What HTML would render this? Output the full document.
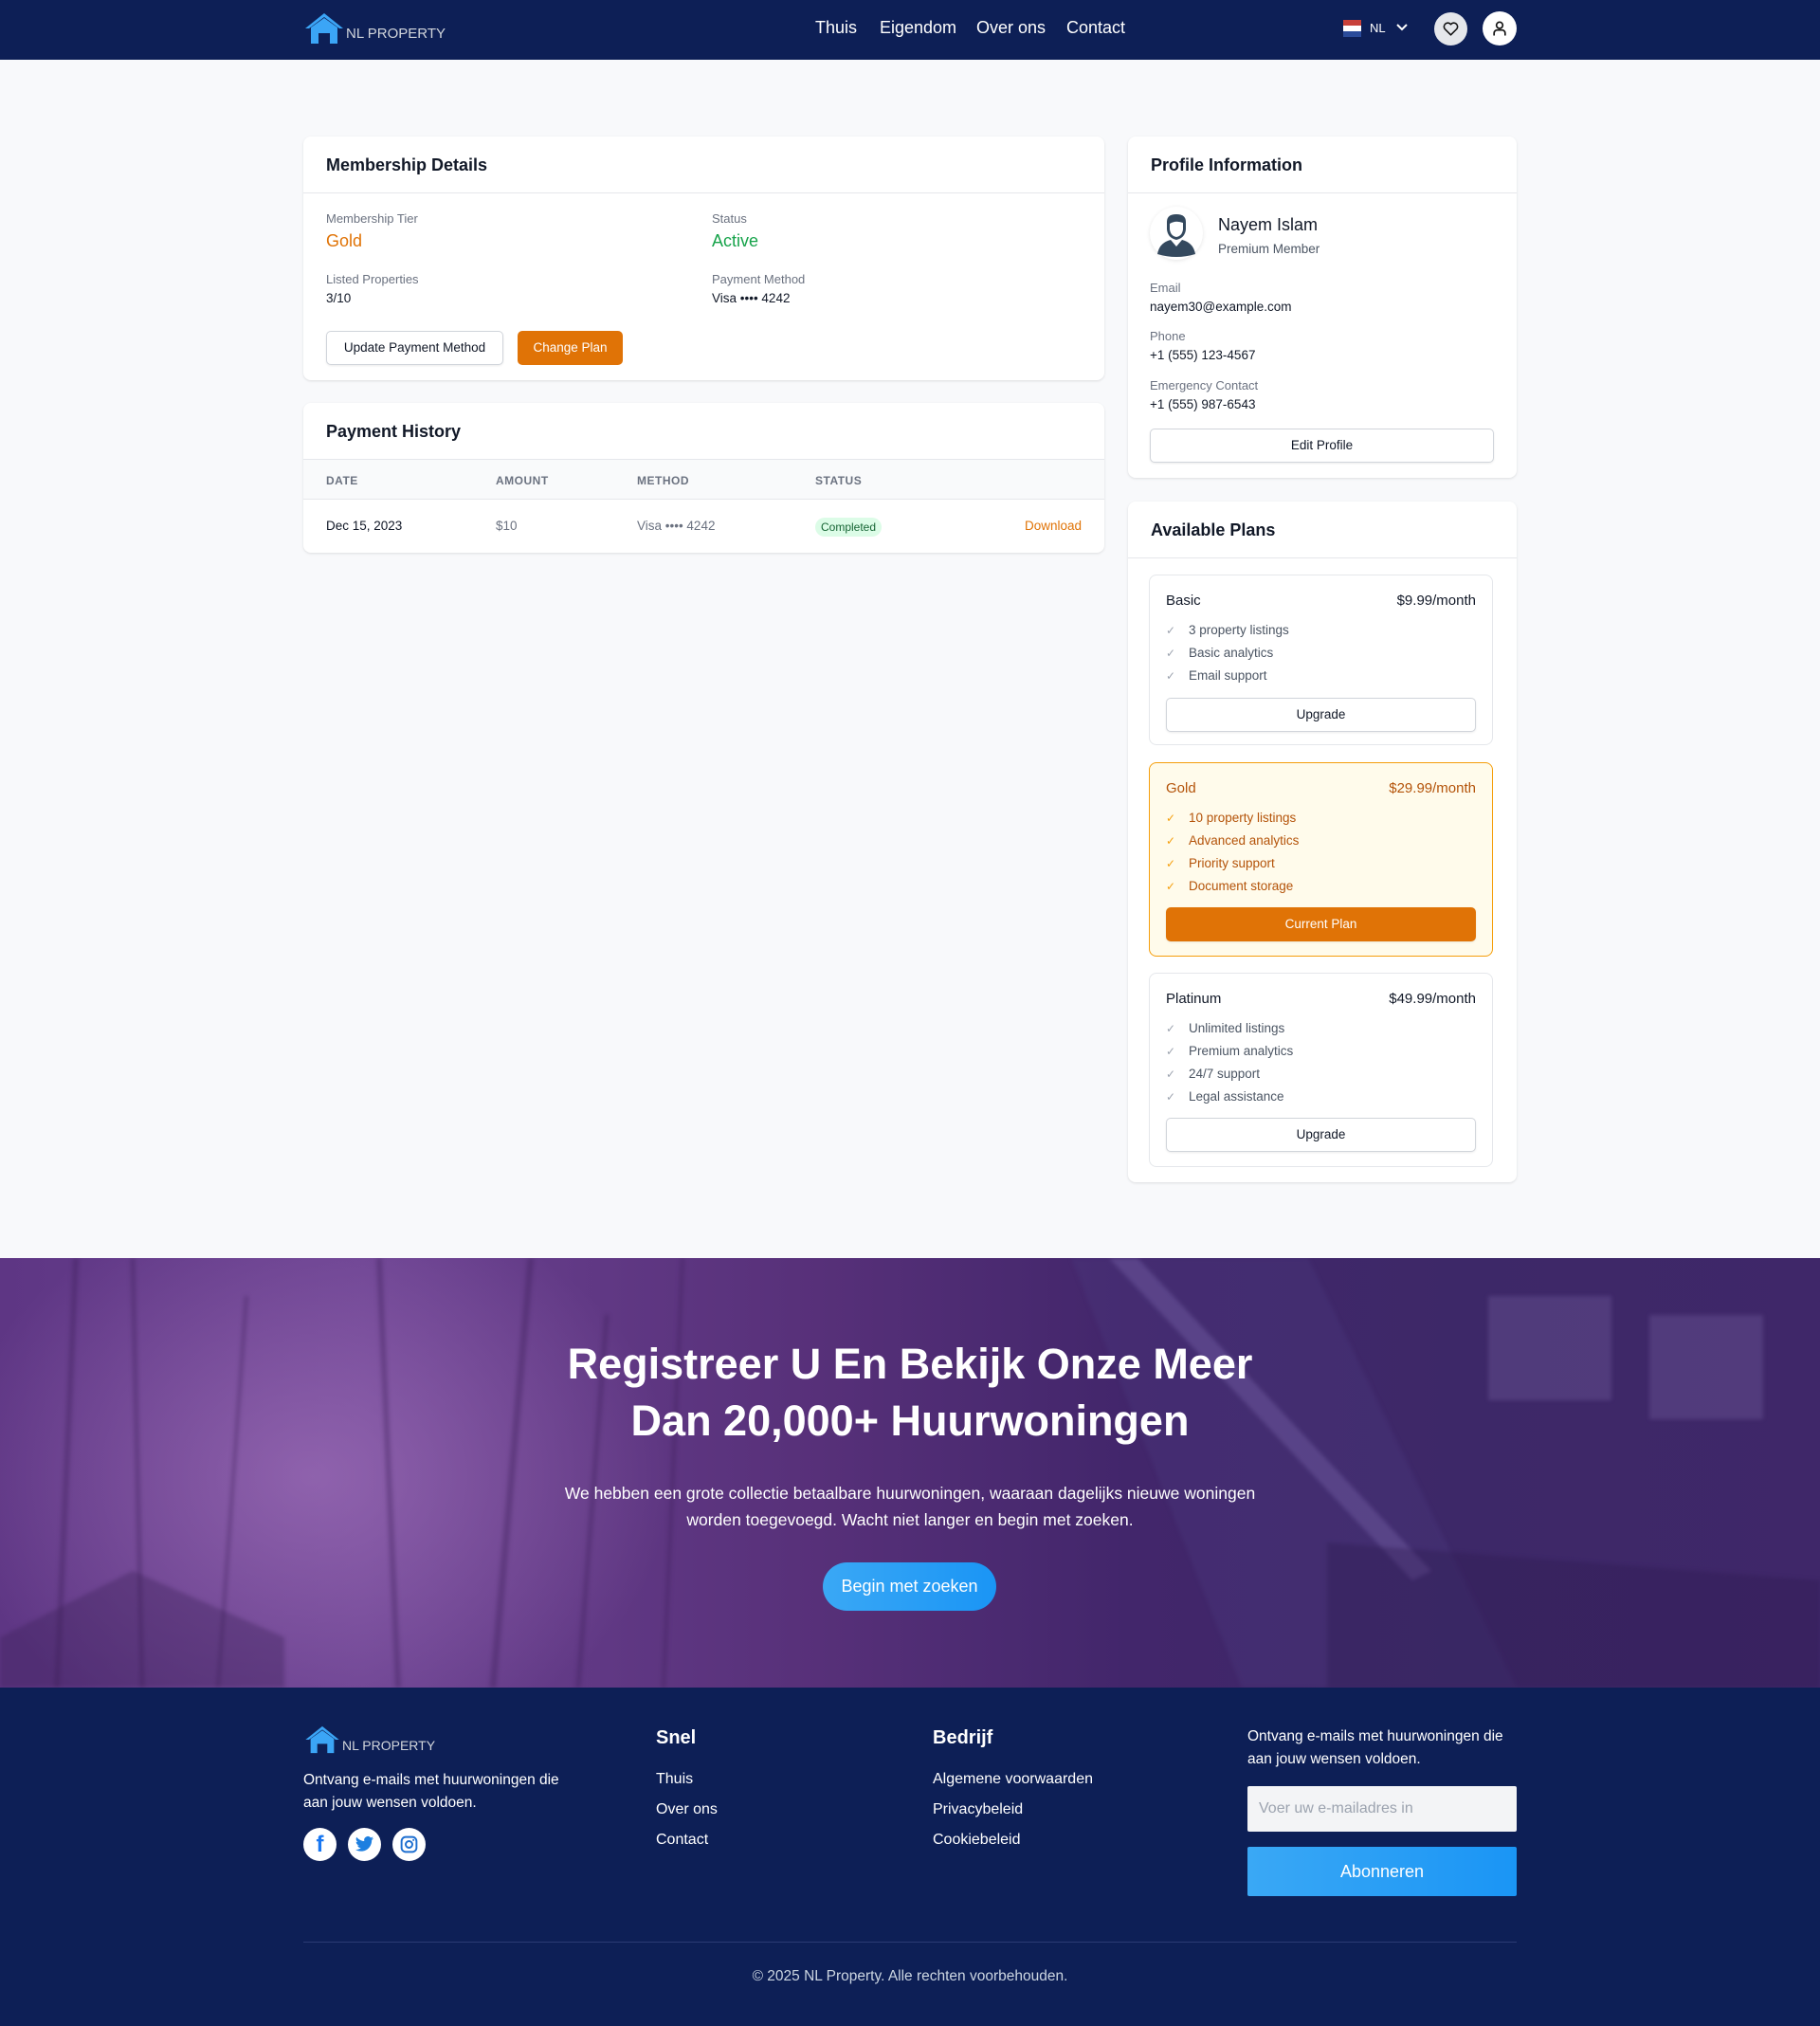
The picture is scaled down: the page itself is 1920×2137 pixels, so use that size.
<!DOCTYPE html>
<html><head><meta charset="utf-8">
<style>
*{box-sizing:border-box;margin:0;padding:0}
body{width:1920px;height:2137px;background:#f8f9fb;font-family:"Liberation Sans",Arial,sans-serif;color:#111827;position:relative;overflow:hidden}
.abs{position:absolute}
nav{position:absolute;left:0;top:0;width:1920px;height:63px;background:#0d1f56}
.navlink{position:absolute;top:19px;color:#fff;font-size:18px}
.card{position:absolute;background:#fff;border-radius:8px;box-shadow:0 1px 3px rgba(0,0,0,.08),0 1px 2px rgba(0,0,0,.04)}
.ch{position:absolute;left:0;right:0;height:60px;border-bottom:1px solid #e5e7eb}
.ch span{position:absolute;left:24px;top:20px;font-size:18px;font-weight:600;color:#111827}
.lbl{position:absolute;font-size:13px;color:#6b7280}
.val{position:absolute;font-size:13.5px;color:#111827}
.btn{position:absolute;border:1px solid #d1d5db;border-radius:5px;background:#fff;font-size:13.5px;text-align:center;color:#111827;box-shadow:0 1px 2px rgba(0,0,0,.08)}
.plan{position:absolute;left:22px;width:363px;border:1px solid #e5e7eb;border-radius:8px}
.plan .nm{position:absolute;left:17px;top:18px;font-size:15px}
.plan .pr{position:absolute;right:17px;top:18px;font-size:15px}
.plan ul{position:absolute;left:17px;top:48px;list-style:none}
.plan li{font-size:13.5px;color:#4b5563;height:24px;line-height:19px}
.plan li:before{content:"\2713";color:#9ca3af;display:inline-block;width:24px;font-size:12px}
.plan .pb{position:absolute;left:17px;right:17px;height:36px;line-height:34px;border:1px solid #d1d5db;border-radius:5px;text-align:center;font-size:13.5px;box-shadow:0 1px 2px rgba(0,0,0,.08);background:#fff}
.fl{position:absolute;color:#fff;font-size:16px}
</style></head><body>
<nav>
 <svg class="abs" style="left:320px;top:13px" width="44" height="34" viewBox="0 0 44 34"><path d="M22 1 L2 17 L6 17 L22 5 L38 17 L42 17 Z" fill="#3ba5f6"/><path d="M8 16 L22 6 L36 16 L36 33 L28 33 L28 22 L16 22 L16 33 L8 33 Z" fill="#3ba5f6"/></svg>
 <div class="abs" style="left:365px;top:27px;color:#d1d5db;font-size:15px">NL PROPERTY</div>
 <div class="navlink" style="left:860px">Thuis</div>
 <div class="navlink" style="left:928px">Eigendom</div>
 <div class="navlink" style="left:1030px">Over ons</div>
 <div class="navlink" style="left:1125px">Contact</div>
 <div class="abs" style="left:1417px;top:21px;width:19px;height:18px"><div style="height:6px;background:#c8413a"></div><div style="height:6px;background:#fff"></div><div style="height:6px;background:#2a4b9a"></div></div>
 <div class="abs" style="left:1445px;top:22px;color:#fff;font-size:13px">NL</div>
 <svg class="abs" style="left:1472px;top:24px" width="14" height="10" viewBox="0 0 14 10"><path d="M2 2 L7 7 L12 2" stroke="#fff" stroke-width="2" fill="none"/></svg>
 <div class="abs" style="left:1513px;top:13px;width:35px;height:35px;border-radius:50%;background:#e5e7eb"></div>
 <svg class="abs" style="left:1521px;top:21px" width="19" height="19" viewBox="0 0 24 24"><path d="M12 20 L4 12 A4.5 4.5 0 0 1 12 6 A4.5 4.5 0 0 1 20 12 Z" stroke="#111" stroke-width="2" fill="none" stroke-linejoin="round"/></svg>
 <div class="abs" style="left:1564px;top:12px;width:36px;height:36px;border-radius:50%;background:#fff"></div>
 <svg class="abs" style="left:1572px;top:20px" width="20" height="20" viewBox="0 0 24 24"><circle cx="12" cy="8" r="4" stroke="#111" stroke-width="2" fill="none"/><path d="M5 21 V18 A4 4 0 0 1 9 14 H15 A4 4 0 0 1 19 18 V21" stroke="#111" stroke-width="2" fill="none"/></svg>
</nav>

<div class="card" style="left:320px;top:144px;width:845px;height:257px">
 <div class="ch" style="top:0"><span>Membership Details</span></div>
 <div class="lbl" style="left:24px;top:79px">Membership Tier</div>
 <div class="abs" style="left:24px;top:100px;font-size:18px;color:#e07306">Gold</div>
 <div class="lbl" style="left:431px;top:79px">Status</div>
 <div class="abs" style="left:431px;top:100px;font-size:18px;color:#16a34a">Active</div>
 <div class="lbl" style="left:24px;top:143px">Listed Properties</div>
 <div class="val" style="left:24px;top:163px">3/10</div>
 <div class="lbl" style="left:431px;top:143px">Payment Method</div>
 <div class="val" style="left:431px;top:163px">Visa •••• 4242</div>
 <div class="btn" style="left:24px;top:205px;width:187px;height:36px;line-height:34px">Update Payment Method</div>
 <div class="abs" style="left:226px;top:205px;width:111px;height:36px;line-height:36px;border-radius:5px;background:#e07306;color:#fff;font-size:13.5px;text-align:center">Change Plan</div>
</div>

<div class="card" style="left:320px;top:425px;width:845px;height:158px;overflow:hidden">
 <div class="ch" style="top:0"><span>Payment History</span></div>
 <div class="abs" style="left:0;right:0;top:60px;height:42px;background:#f9fafb;border-bottom:1px solid #e5e7eb"></div>
 <div class="abs" style="left:24px;top:75px;font-size:12px;font-weight:bold;color:#6b7280;letter-spacing:.5px">DATE</div>
 <div class="abs" style="left:203px;top:75px;font-size:12px;font-weight:bold;color:#6b7280;letter-spacing:.5px">AMOUNT</div>
 <div class="abs" style="left:352px;top:75px;font-size:12px;font-weight:bold;color:#6b7280;letter-spacing:.5px">METHOD</div>
 <div class="abs" style="left:540px;top:75px;font-size:12px;font-weight:bold;color:#6b7280;letter-spacing:.5px">STATUS</div>
 <div class="val" style="left:24px;top:122px">Dec 15, 2023</div>
 <div class="abs" style="left:203px;top:122px;font-size:13.5px;color:#6b7280">$10</div>
 <div class="abs" style="left:352px;top:122px;font-size:13.5px;color:#6b7280">Visa •••• 4242</div>
 <div class="abs" style="left:540px;top:121px;height:20px;padding:0 6px;line-height:20px;border-radius:10px;background:#dcfce7;color:#166534;font-size:12px">Completed</div>
 <div class="abs" style="right:24px;top:122px;font-size:13.5px;color:#e07306">Download</div>
</div>

<div class="card" style="left:1190px;top:144px;width:410px;height:360px">
 <div class="ch" style="top:0"><span>Profile Information</span></div>
 <div class="abs" style="left:23px;top:74px;width:56px;height:56px;border-radius:50%;background:#fff;box-shadow:0 1px 4px rgba(0,0,0,.1)"></div>
 <svg class="abs" style="left:23px;top:74px" width="56" height="56" viewBox="0 0 56 56"><path d="M18 16 Q18 8 28 8 Q38 8 38 16 L38 24 Q37 33 28 35 Q19 33 18 24 Z" fill="#34495e"/><path d="M21 18 Q27 14 35 17 L35 24 Q34 31 28 32 Q22 31 21 24 Z" fill="#fff"/><path d="M8 50 Q10 38 22 35 L28 42 L34 35 Q46 38 48 50 Q28 56 8 50 Z" fill="#34495e"/><path d="M26 38 L28 41 L30 38 Z" fill="#fff"/></svg>
 <div class="abs" style="left:95px;top:83px;font-size:18px;font-weight:500">Nayem Islam</div>
 <div class="abs" style="left:95px;top:111px;font-size:13.5px;color:#4b5563">Premium Member</div>
 <div class="lbl" style="left:23px;top:152px">Email</div>
 <div class="val" style="left:23px;top:172px">nayem30@example.com</div>
 <div class="lbl" style="left:23px;top:203px">Phone</div>
 <div class="val" style="left:23px;top:223px">+1 (555) 123-4567</div>
 <div class="lbl" style="left:23px;top:255px">Emergency Contact</div>
 <div class="val" style="left:23px;top:275px">+1 (555) 987-6543</div>
 <div class="btn" style="left:23px;top:308px;width:363px;height:36px;line-height:34px">Edit Profile</div>
</div>

<div class="card" style="left:1190px;top:529px;width:410px;height:718px">
 <div class="ch" style="top:0"><span>Available Plans</span></div>
 <div class="plan" style="top:77px;height:180px">
  <div class="nm">Basic</div><div class="pr">$9.99/month</div>
  <ul><li>3 property listings</li><li>Basic analytics</li><li>Email support</li></ul>
  <div class="pb" style="top:129px">Upgrade</div>
 </div>
 <div class="plan" style="top:275px;height:205px;background:#fffbeb;border-color:#f59e0b">
  <div class="nm" style="color:#b45309">Gold</div><div class="pr" style="color:#b45309">$29.99/month</div>
  <ul><li style="color:#b45309">10 property listings</li><li style="color:#b45309">Advanced analytics</li><li style="color:#b45309">Priority support</li><li style="color:#b45309">Document storage</li></ul>
  <div class="pb" style="top:152px;background:#e07306;border-color:#e07306;color:#fff">Current Plan</div>
 </div>
 <div class="plan" style="top:497px;height:205px">
  <div class="nm">Platinum</div><div class="pr">$49.99/month</div>
  <ul><li>Unlimited listings</li><li>Premium analytics</li><li>24/7 support</li><li>Legal assistance</li></ul>
  <div class="pb" style="top:152px">Upgrade</div>
 </div>
</div>
<style>.plan li[style]:before{color:#f59e0b}</style>

<div class="abs" style="left:0;top:1327px;width:1920px;height:453px;overflow:hidden;background:
 radial-gradient(ellipse 380px 300px at 330px 230px,rgba(190,140,210,.45),rgba(190,140,210,0)),
 linear-gradient(90deg,#5e3684 0%,#6a4190 20%,#573079 45%,#42266b 62%,#3d2868 80%,#3f2769 100%)">
 <svg class="abs" style="left:0;top:0;filter:blur(2px)" width="1920" height="453" viewBox="0 0 1920 453">
  <g stroke="#3a1d55" stroke-opacity=".35" fill="none">
   <path d="M60 453 L80 0" stroke-width="6"/><path d="M150 453 L140 0" stroke-width="5"/><path d="M230 453 L260 40" stroke-width="4"/>
   <path d="M420 453 L400 0" stroke-width="6"/><path d="M520 453 L560 0" stroke-width="7"/><path d="M610 453 L640 60" stroke-width="5"/>
   <path d="M700 453 L720 0" stroke-width="4"/>
  </g>
  <path d="M1130 0 L1380 0 L1600 453 L1310 453 Z" fill="#4a3a7e" fill-opacity=".35"/>
  <path d="M1170 0 L1200 0 L1510 330 L1490 340 Z" fill="#8a7cbf" fill-opacity=".3"/>
  <path d="M1570 40 L1700 40 L1700 150 L1570 150 Z" fill="#7d6aa8" fill-opacity=".3"/>
  <path d="M1740 60 L1860 60 L1860 170 L1740 170 Z" fill="#7d6aa8" fill-opacity=".3"/>
  <path d="M1400 300 L1920 340 L1920 453 L1400 453 Z" fill="#2f1a50" fill-opacity=".35"/>
  <path d="M0 400 L140 330 L300 400 L300 453 L0 453 Z" fill="#3a1f55" fill-opacity=".35"/>
 </svg>
 <div class="abs" style="left:0;width:1920px;top:82px;text-align:center;color:#fff;font-size:45px;font-weight:bold;line-height:60px">Registreer U En Bekijk Onze Meer<br>Dan 20,000+ Huurwoningen</div>
 <div class="abs" style="left:0;width:1920px;top:234px;text-align:center;color:#fff;font-size:17.5px;line-height:28px">We hebben een grote collectie betaalbare huurwoningen, waaraan dagelijks nieuwe woningen<br>worden toegevoegd. Wacht niet langer en begin met zoeken.</div>
 <div class="abs" style="left:868px;top:321px;width:183px;height:51px;border-radius:26px;background:linear-gradient(90deg,#3aa8f5,#1a95f5);color:#fff;font-size:18px;line-height:51px;text-align:center">Begin met zoeken</div>
</div>

<div class="abs" style="left:0;top:1780px;width:1920px;height:357px;background:#0d1f56">
 <svg class="abs" style="left:320px;top:40px" width="40" height="30" viewBox="0 0 44 34"><path d="M22 1 L2 17 L6 17 L22 5 L38 17 L42 17 Z" fill="#3ba5f6"/><path d="M8 16 L22 6 L36 16 L36 33 L28 33 L28 22 L16 22 L16 33 L8 33 Z" fill="#3ba5f6"/></svg>
 <div class="abs" style="left:361px;top:53px;color:#d1d5db;font-size:14px">NL PROPERTY</div>
 <div class="abs" style="left:320px;top:86px;color:#fff;font-size:15.5px;line-height:24px">Ontvang e-mails met huurwoningen die<br>aan jouw wensen voldoen.</div>
 <div class="abs" style="left:320px;top:148px;width:35px;height:35px;border-radius:50%;background:#fff"></div>
 <div class="abs" style="left:320px;top:148px;width:35px;height:35px;text-align:center;line-height:36px;color:#1877f2;font-size:24px;font-weight:bold">f</div>
 <div class="abs" style="left:367px;top:148px;width:35px;height:35px;border-radius:50%;background:#fff"></div>
 <svg class="abs" style="left:374px;top:156px" width="21" height="19" viewBox="0 0 24 20"><path d="M23 2.5c-.8.4-1.7.6-2.6.7.9-.6 1.6-1.4 2-2.5-.9.5-1.9.9-2.9 1.1A4.5 4.5 0 0 0 11.8 6 12.8 12.8 0 0 1 2.5 1.2a4.5 4.5 0 0 0 1.4 6A4.5 4.5 0 0 1 1.900 6.7a4.5 4.5 0 0 0 3.6 4.4 4.5 4.5 0 0 1-2 .1 4.5 4.5 0 0 0 4.2 3.1A9 9 0 0 1 1 16.2 12.8 12.8 0 0 0 7.9 18.2c8.3 0 12.8-6.9 12.8-12.8v-.6c.9-.6 1.600-1.4 2.300-2.3z" fill="#1d7fe0"/></svg>
 <div class="abs" style="left:414px;top:148px;width:35px;height:35px;border-radius:50%;background:#fff"></div>
 <svg class="abs" style="left:421px;top:155px" width="21" height="21" viewBox="0 0 24 24"><rect x="3" y="3" width="18" height="18" rx="5" stroke="#1d6fd0" stroke-width="2.2" fill="none"/><circle cx="12" cy="12" r="4" stroke="#1d6fd0" stroke-width="2.2" fill="none"/><circle cx="17.3" cy="6.7" r="1.2" fill="#1d6fd0"/></svg>
 <div class="fl" style="left:692px;top:42px;font-size:20px;font-weight:bold">Snel</div>
 <div class="fl" style="left:692px;top:88px">Thuis</div>
 <div class="fl" style="left:692px;top:120px">Over ons</div>
 <div class="fl" style="left:692px;top:152px">Contact</div>
 <div class="fl" style="left:984px;top:42px;font-size:20px;font-weight:bold">Bedrijf</div>
 <div class="fl" style="left:984px;top:88px">Algemene voorwaarden</div>
 <div class="fl" style="left:984px;top:120px">Privacybeleid</div>
 <div class="fl" style="left:984px;top:152px">Cookiebeleid</div>
 <div class="abs" style="left:1316px;top:40px;color:#fff;font-size:15.5px;line-height:24px">Ontvang e-mails met huurwoningen die<br>aan jouw wensen voldoen.</div>
 <div class="abs" style="left:1316px;top:104px;width:284px;height:48px;background:#f3f4f6;border-radius:2px;color:#9ca3af;font-size:16px;line-height:48px;padding-left:12px">Voer uw e-mailadres in</div>
 <div class="abs" style="left:1316px;top:168px;width:284px;height:52px;background:linear-gradient(90deg,#3aa8f5,#1a95f5);border-radius:2px;color:#fff;font-size:18px;line-height:52px;text-align:center">Abonneren</div>
 <div class="abs" style="left:320px;top:268px;width:1280px;height:1px;background:#2a3b74"></div>
 <div class="abs" style="left:0;width:1920px;top:296px;text-align:center;color:#cbd5e1;font-size:15.5px">© 2025 NL Property. Alle rechten voorbehouden.</div>
</div>
</body></html>
